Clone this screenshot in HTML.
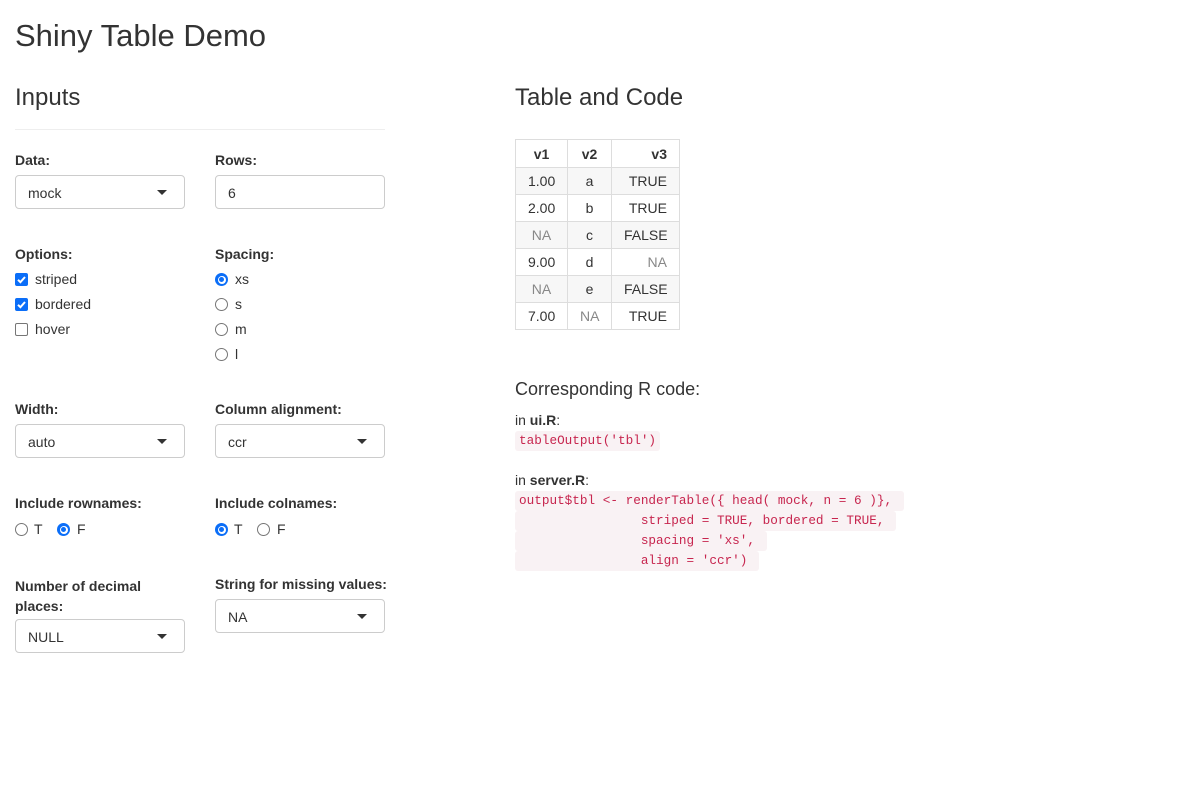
<!DOCTYPE html>
<html><head><style>
body{margin:0;width:1200px;height:787px;background:#fff;font-family:"Liberation Sans",Arial,sans-serif;color:#333;font-size:14px;position:relative;overflow:hidden}
.a{position:absolute;white-space:nowrap}
.lbl{font-weight:bold;font-size:14px}
.sel{position:absolute;width:170px;height:34px;border:1px solid #ccc;border-radius:4px;background:#fff;box-sizing:border-box}
.sel span{position:absolute;left:12px;top:9px;font-size:14px}
.sel i{position:absolute;right:17px;top:14px;width:0;height:0;border-left:5px solid transparent;border-right:5px solid transparent;border-top:5px solid #333}
.cb{position:absolute;width:13px;height:13px;box-sizing:border-box;border-radius:2px}
.cb.on{background:#0b6ef8}
.cb.off{border:1px solid #767676}
.rd{position:absolute;width:13px;height:13px;box-sizing:border-box;border-radius:50%;border:1px solid #767676}
.rd.on{border:none;background:#0b6ef8}
.rd.on::after{content:"";position:absolute;left:2.5px;top:2.5px;width:8px;height:8px;border-radius:50%;background:#fff}
.rd.on::before{content:"";position:absolute;left:4px;top:4px;width:5px;height:5px;border-radius:50%;background:#0b6ef8;z-index:1}
table{position:absolute;left:515px;top:139px;border-collapse:collapse;font-size:14px;table-layout:fixed;width:164px}
td,th{border:1px solid #ddd;height:27px;padding:0 12px;box-sizing:border-box}
th{height:28px}
tbody tr:nth-child(odd){background:#f7f7f7}
.na{color:#888}
code{font-family:"Liberation Mono",monospace;font-size:12.7px;line-height:16px;display:inline-block;color:#c7254e;background:#f9f2f4;border-radius:3px;padding:2px 4px;white-space:pre;vertical-align:top}
</style></head><body>
<div class="a" style="left:15px;top:18px;font-size:31px">Shiny Table Demo</div>
<div class="a" style="left:15px;top:84px;font-size:24px">Inputs</div>
<div class="a" style="left:15px;top:129px;width:370px;border-top:1px solid #eee"></div>

<div class="a lbl" style="left:15px;top:152px">Data:</div>
<div class="sel" style="left:15px;top:175px"><span>mock</span><i></i></div>
<div class="a lbl" style="left:215px;top:152px">Rows:</div>
<div class="sel" style="left:215px;top:175px"><span>6</span></div>

<div class="a lbl" style="left:15px;top:246px">Options:</div>
<div class="cb on" style="left:15px;top:273px"><svg width="13" height="13"><path d="M3 6.8L5.4 9.2L10 4" stroke="#fff" stroke-width="2" fill="none"/></svg></div>
<div class="a" style="left:35px;top:271px">striped</div>
<div class="cb on" style="left:15px;top:298px"><svg width="13" height="13"><path d="M3 6.8L5.4 9.2L10 4" stroke="#fff" stroke-width="2" fill="none"/></svg></div>
<div class="a" style="left:35px;top:296px">bordered</div>
<div class="cb off" style="left:15px;top:323px"></div>
<div class="a" style="left:35px;top:321px">hover</div>

<div class="a lbl" style="left:215px;top:246px">Spacing:</div>
<div class="rd on" style="left:215px;top:273px"></div><div class="a" style="left:235px;top:271px">xs</div>
<div class="rd" style="left:215px;top:298px"></div><div class="a" style="left:235px;top:296px">s</div>
<div class="rd" style="left:215px;top:323px"></div><div class="a" style="left:235px;top:321px">m</div>
<div class="rd" style="left:215px;top:348px"></div><div class="a" style="left:235px;top:346px">l</div>

<div class="a lbl" style="left:15px;top:401px">Width:</div>
<div class="sel" style="left:15px;top:424px"><span>auto</span><i></i></div>
<div class="a lbl" style="left:215px;top:401px">Column alignment:</div>
<div class="sel" style="left:215px;top:424px"><span>ccr</span><i></i></div>

<div class="a lbl" style="left:15px;top:495px">Include rownames:</div>
<div class="rd" style="left:15px;top:523px"></div><div class="a" style="left:34px;top:521px">T</div>
<div class="rd on" style="left:57px;top:523px"></div><div class="a" style="left:77px;top:521px">F</div>
<div class="a lbl" style="left:215px;top:495px">Include colnames:</div>
<div class="rd on" style="left:215px;top:523px"></div><div class="a" style="left:234px;top:521px">T</div>
<div class="rd" style="left:257px;top:523px"></div><div class="a" style="left:277px;top:521px">F</div>

<div class="a lbl" style="left:15px;top:576px;line-height:20px">Number of decimal<br>places:</div>
<div class="sel" style="left:15px;top:619px"><span>NULL</span><i></i></div>
<div class="a lbl" style="left:215px;top:576px">String for missing values:</div>
<div class="sel" style="left:215px;top:599px"><span>NA</span><i></i></div>

<div class="a" style="left:515px;top:84px;font-size:24px">Table and Code</div>
<table>
<colgroup><col style="width:52px"><col style="width:44px"><col style="width:68px"></colgroup>
<thead><tr><th style="text-align:center">v1</th><th style="text-align:center">v2</th><th style="text-align:right">v3</th></tr></thead>
<tbody>
<tr><td align="center">1.00</td><td align="center">a</td><td align="right">TRUE</td></tr>
<tr><td align="center">2.00</td><td align="center">b</td><td align="right">TRUE</td></tr>
<tr><td align="center" class="na">NA</td><td align="center">c</td><td align="right">FALSE</td></tr>
<tr><td align="center">9.00</td><td align="center">d</td><td align="right" class="na">NA</td></tr>
<tr><td align="center" class="na">NA</td><td align="center">e</td><td align="right">FALSE</td></tr>
<tr><td align="center">7.00</td><td align="center" class="na">NA</td><td align="right">TRUE</td></tr>
</tbody></table>

<div class="a" style="left:515px;top:379px;font-size:18px">Corresponding R code:</div>
<div class="a" style="left:515px;top:412px">in <b>ui.R</b>:</div>
<div class="a" style="left:515px;top:431px"><code>tableOutput('tbl')</code></div>
<div class="a" style="left:515px;top:472px">in <b>server.R</b>:</div>
<div class="a" style="left:515px;top:491px;line-height:0"><code>output$tbl &lt;- renderTable({ head( mock, n = 6 )}, </code><br><code>                striped = TRUE, bordered = TRUE, </code><br><code>                spacing = 'xs', </code><br><code>                align = 'ccr') </code></div>
</body></html>
